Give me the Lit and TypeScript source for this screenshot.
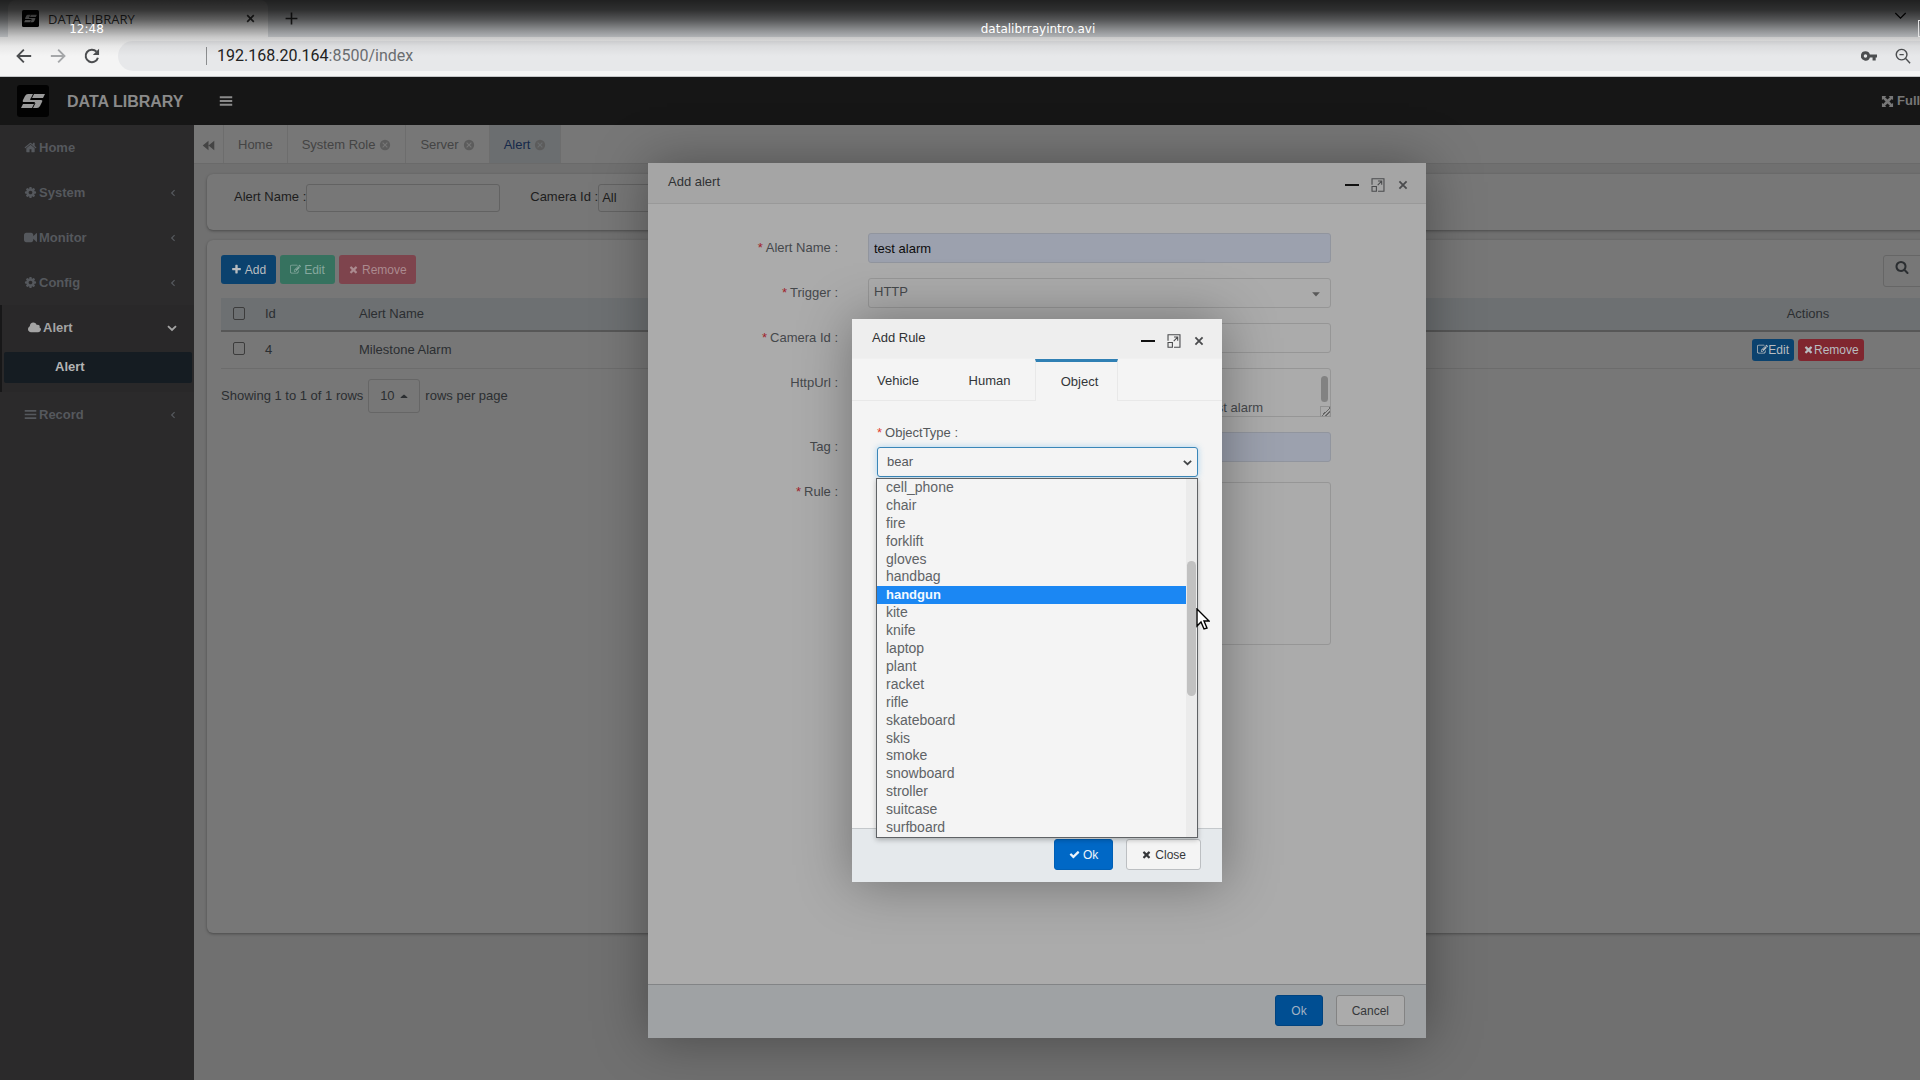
import { LitElement, html, css, svg } from "lit";
import { customElement, property } from "lit/decorators.js";
import { classMap } from "lit/directives/class-map.js";

const PATHS: Record<string, unknown> = {
  plus: svg`<path d="M1600 736v192q0 40-28 68t-68 28h-416v416q0 40-28 68t-68 28h-192q-40 0-68-28t-28-68v-416h-416q-40 0-68-28t-28-68v-192q0-40 28-68t68-28h416v-416q0-40 28-68t68-28h192q40 0 68 28t28 68v416h416q40 0 68 28t28 68z"/>`,
  times: svg`<path d="M1490 1322q0 40-28 68l-136 136q-28 28-68 28t-68-28l-294-294-294 294q-28 28-68 28t-68-28l-136-136q-28-28-28-68t28-68l294-294-294-294q-28-28-28-68t28-68l136-136q28-28 68-28t68 28l294 294 294-294q28-28 68-28t68 28l136 136q28 28 28 68t-28 68l-294 294 294 294q28 28 28 68z"/>`,
  check: svg`<path d="M1671 566q0 40-28 68l-724 724-136 136q-28 28-68 28t-68-28l-136-136-362-362q-28-28-28-68t28-68l136-136q28-28 68-28t68 28l294 295 656-657q28-28 68-28t68 28l136 136q28 28 28 68z"/>`,
  home: svg`<path d="M1472 992v480q0 26-19 45t-45 19h-384v-384h-256v384h-384q-26 0-45-19t-19-45v-480q0-1 .5-3t.5-3l575-474 575 474q1 2 1 6zm223-69l-62 74q-8 9-21 11h-3q-13 0-21-7l-692-577-692 577q-12 8-24 7-13-2-21-11l-62-74q-8-10-7-23.5t11-21.5l719-599q32-26 76-26t76 26l244 204v-195q0-14 9-23t23-9h192q14 0 23 9t9 23v408l219 182q10 8 11 21.5t-7 23.5z"/>`,
  cog: svg`<path d="M1152 896q0-106-75-181t-181-75-181 75-75 181 75 181 181 75 181-75 75-181zm512-109v222q0 12-8 23t-20 13l-185 28q-19 54-39 91 35 50 107 138 10 12 10 25t-9 23q-27 37-99 108t-94 71q-12 0-26-9l-138-108q-44 23-91 38-16 136-29 186-7 28-36 28h-222q-14 0-24.5-8.5t-11.5-21.5l-28-184q-49-16-90-37l-141 107q-10 9-25 9-14 0-25-11-126-114-165-168-7-10-7-23 0-12 8-23 15-21 51-66.5t54-70.5q-27-50-41-99l-183-27q-13-2-21-12.5t-8-23.5v-222q0-12 8-23t19-13l186-28q14-46 39-92-40-57-107-138-10-12-10-24 0-10 9-23 26-36 98.5-107.5t94.5-71.5q13 0 26 10l138 107q44-23 91-38 16-136 29-186 7-28 36-28h222q14 0 24.5 8.5t11.5 21.5l28 184q49 16 90 37l142-107q9-9 24-9 13 0 25 10 129 119 165 170 7 8 7 22 0 12-8 23-15 21-51 66.5t-54 70.5q26 50 41 98l183 28q13 2 21 12.5t8 23.5z"/>`,
  video: svg`<path d="M1792 352v1088q0 42-39 59-13 5-25 5-27 0-45-19l-403-403v166q0 119-84.5 203.5t-203.5 84.5h-704q-119 0-203.5-84.5t-84.5-203.5v-704q0-119 84.5-203.5t203.5-84.5h704q119 0 203.5 84.5t84.5 203.5v165l403-402q18-19 45-19 12 0 25 5 39 17 39 59z"/>`,
  cloud: svg`<path d="M1792 1090q0 180-118 306t-298 140H416q-170 0-293-121T0 1120q0-130 72-236t184-156q-10-220 130-370t340-150q180 0 310 100t170 250q60-50 146-50 110 0 186 78t76 186q0 60-34 116 92 30 152 100t60 102z"/>`,
  bars: svg`<path d="M100 290h1592v240H100zM100 776h1592v240H100zM100 1262h1592v240H100z"/>`,
  search: svg`<path d="M1216 832q0-185-131.5-316.5t-316.5-131.5-316.5 131.5-131.5 316.5 131.5 316.5 316.5 131.5 316.5-131.5 131.5-316.5zm512 832q0 52-38 90t-90 38q-54 0-90-38l-343-342q-179 124-399 124-143 0-273.5-55.5t-225-150-150-225-55.5-273.5 55.5-273.5 150-225 225-150 273.5-55.5 273.5 55.5 225 150 150 225 55.5 273.5q0 220-124 399l343 343q37 37 37 90z"/>`,
  edit: svg`<path d="M888 1184l116-116-152-152-116 116v56h96v96h56zm440-720q-16-16-33 1l-350 350q-17 17-1 33t33-1l350-350q17-17 1-33zm80 594v190q0 119-84.5 203.5t-203.5 84.5h-832q-119 0-203.5-84.5t-84.5-203.5v-832q0-119 84.5-203.5t203.5-84.5h832q63 0 117 25 15 7 18 23 3 17-9 29l-49 49q-14 14-32 8-23-6-45-6h-832q-66 0-113 47t-47 113v832q0 66 47 113t113 47h832q66 0 113-47t47-113v-126q0-13 9-22l64-64q15-15 35-7t20 29zm-96-738l288 288-672 672h-288v-288zm444 132l-92 92-288-288 92-92q28-28 68-28t68 28l152 152q28 28 28 68t-28 68z"/>`,
  backward: svg`<path d="M896 256v1280L100 896zM1692 256v1280L896 896z"/>`,
  circleX: svg`<path fill-rule="evenodd" d="M896 128a768 768 0 1 0 0 1536a768 768 0 0 0 0-1536zM600 480l296 296 296-296 120 120-296 296 296 296-120 120-296-296-296 296-120-120 296-296-296-296z"/>`,
  arrows: svg`<path d="M128 128h600L560 296l336 336 336-336-168-168h600v600l-168-168-336 336 336 336 168-168v600h-600l168-168-336-336-336 336 168 168H128v-600l168 168 336-336-336-336-168 168z"/>`,
  left: svg`<path d="M1180 380L660 896l520 516" fill="none" stroke="currentColor" stroke-width="220"/>`,
  down: svg`<path d="M300 620L896 1180l596-560" fill="none" stroke="currentColor" stroke-width="280"/>`,
  caretUp: svg`<path d="M256 1250q0-80 640-620 640 540 640 620z"/>`,
  caretDown: svg`<path d="M320 640h1152L896 1280z"/>`,
  close: svg`<path d="M360 360L1432 1432M1432 360L360 1432" fill="none" stroke="currentColor" stroke-width="270"/>`,
  max: svg`<path d="M130 860V100h1530v1590H900M130 1080h560v610H130zM860 900L1330 420M900 380h470v470" fill="none" stroke="currentColor" stroke-width="140"/>`,
  min: svg`<path d="M0 770h1792v256H0z"/>`,
  back: svg`<path d="M1700 896H200M880 180L170 896l710 716" fill="none" stroke="currentColor" stroke-width="210"/>`,
  forward: svg`<path d="M92 896h1500M912 180l710 716-710 716" fill="none" stroke="currentColor" stroke-width="210"/>`,
  reload: svg`<path d="M1560 1090A700 700 0 1 1 1400 410" fill="none" stroke="currentColor" stroke-width="230"/><path d="M1690 90v700H990z"/>`,
  tabPlus: svg`<path d="M896 80v1632M80 896h1632" fill="none" stroke="currentColor" stroke-width="220"/>`,
  thinDown: svg`<path d="M180 560L896 1270l716-710" fill="none" stroke="currentColor" stroke-width="170"/>`,
  key: svg`<path fill-rule="evenodd" d="M500 370a520 520 0 1 0 495 690h300v330h350v-330h147V740H995A520 520 0 0 0 500 370zM500 700a196 196 0 1 1 0 392a196 196 0 0 1 0-392z"/>`,
  zoomOut: svg`<path d="M740 150a590 590 0 1 0 .1 0zM1170 1160l520 540M500 740h480" fill="none" stroke="currentColor" stroke-width="160"/>`,
};

@customElement("ui-icon")
export class UiIcon extends LitElement {
  static styles = css`
    :host { display: inline-flex; flex: none; width: 13px; height: 13px; }
    svg { width: 100%; height: 100%; fill: currentColor; }
  `;
  @property() name = "";
  render() {
    return html`<svg viewBox="0 0 1792 1792" aria-hidden="true">${PATHS[this.name]}</svg>`;
  }
}

@customElement("brand-mark")
export class BrandMark extends LitElement {
  static styles = css`
    :host { display: inline-flex; flex: none; }
    svg { width: 100%; height: 100%; }
  `;
  render() {
    return html`<svg viewBox="0 0 32 32" aria-hidden="true">
      <rect width="32" height="32" rx="3" fill="#020202" />
      <path d="M11 9h17l-2 4H14l-1 2h11q2 0 1 2l-2 4q-1 2-3 2H4l2-4h11l1-2H7q-2 0-1-2l2-4q1-2 3-2z" fill="currentColor" />
      <path d="M17 8l-3 6M18 18l-3 6" stroke="#020202" stroke-width="1" />
    </svg>`;
  }
}

interface MenuItem { label: string; icon: string; open?: boolean; leaf?: boolean }

const MENU: MenuItem[] = [
  { label: "Home", icon: "home", leaf: true },
  { label: "System", icon: "cog" },
  { label: "Monitor", icon: "video" },
  { label: "Config", icon: "cog" },
  { label: "Alert", icon: "cloud", open: true },
  { label: "Record", icon: "bars" },
];
const TABS = ["Home", "System Role", "Server", "Alert"];
const OBJECTS = [
  "cell_phone", "chair", "fire", "forklift", "gloves", "handbag", "handgun", "kite", "knife", "laptop",
  "plant", "racket", "rifle", "skateboard", "skis", "smoke", "snowboard", "stroller", "suitcase", "surfboard",
];

@customElement("app-root")
export class AppRoot extends LitElement {
  static styles = css`
    :host {
      display: flex; flex-direction: column; position: relative; overflow: hidden;
      min-height: 100vh; background: #707070;
      font: 13px/18px "Liberation Sans", Arial, sans-serif; color: #303234;
    }
    * { box-sizing: border-box; }
    button, input, select, textarea { font: inherit; color: inherit; margin: 0; border-radius: 3px; }
    button { display: inline-flex; align-items: center; justify-content: center; padding: 0; border: 0; background: none; }
    select { appearance: none; }
    a { color: inherit; text-decoration: none; }

    .strip { display: flex; height: 37px; background: #d6d9dc; padding-left: 8px; }
    .tab {
      display: flex; align-items: center; gap: 9px; width: 260px; padding: 0 12px 0 14px;
      background: #f4f4f4; border-radius: 8px 8px 0 0; font: 13px/18px "Open Sans", sans-serif; color: #333;
    }
    .tab brand-mark { width: 17px; height: 17px; color: #b5b5b5; }
    .tab .name { flex: 1; }
    .tab ui-icon { width: 11px; height: 11px; }
    .newtab { width: 46px; color: #2b2b2b; }
    .strip .menu { margin-left: auto; margin-right: 13px; align-self: flex-start; padding-top: 9px; color: #000; }
    .toolbar {
      display: flex; align-items: center; height: 40px; padding: 0 0 1px 16px; gap: 18px;
      background: #f4f4f4; border-bottom: 1px solid #c4c6c8; color: #4c4e50;
    }
    .toolbar button ui-icon { width: 16px; height: 16px; }
    .toolbar .off { color: #a5a7a9; }
    .address {
      flex: 1; display: flex; align-items: center; height: 30px; padding: 0 9px 0 88px; gap: 18px;
      border-radius: 15px 0 0 15px; background: #e7e8ea;
    }
    .url { flex: 1; border-left: 1px solid #8b8d8f; padding-left: 10px; font: 16px/18px Roboto, sans-serif; color: #6b6e71; }
    .url b { font-weight: 400; color: #222; }

    .player {
      position: absolute; inset: 0 0 auto 0; height: 56px; pointer-events: none;
      display: grid; grid-template-columns: 173px 1fr 9px; padding-top: 20px;
      font: 12px/18px "DejaVu Sans", sans-serif; color: #fff; text-align: center;
      background: linear-gradient(rgba(0,0,0,.85) 0, rgba(0,0,0,.78) 10px, rgba(0,0,0,.6) 20px,
        rgba(0,0,0,.34) 30px, rgba(0,0,0,.18) 37px, rgba(0,0,0,.05) 46px, rgba(0,0,0,0) 56px);
    }
    .player .clip { padding-right: 8px; }
    .player .edge { margin-left: 7px; height: 17px; border: 1px solid #e4e4e4; border-right: 0; }

    /* The application is wider than the window, its right part is cut off. */
    .app { flex: 1; display: grid; grid-template: 48px 1fr / 194px 1fr; width: calc(100% + 154px); }
    .head { grid-column: 1 / 3; display: flex; align-items: center; background: #161616; color: #8a8a8a; font-weight: 700; }
    .head brand-mark { width: 32px; height: 32px; margin-left: 17px; color: #999; }
    .head .title { width: 152px; padding: 2px 0 0 18px; font-size: 16px; }
    .head .burger { width: 14px; height: 14px; margin-left: 18px; }
    .head .full { display: flex; align-items: center; gap: 3px; margin-left: auto; width: 193px; color: #777; }

    .side { background: #2b2a2b; color: #55585d; font-weight: 700; }
    .item { display: flex; align-items: center; width: 100%; height: 45px; padding: 0 16px 0 24px; gap: 2px; }
    .item .name { flex: 1; text-align: left; }
    .item ui-icon:last-child { width: 10px; height: 10px; }
    .group.open { border-left: 2px solid #171718; background: #292829; color: #a4a4a4; padding-bottom: 9px; }
    .group.open .item { padding-left: 26px; }
    .group.open .item ui-icon:last-child { width: 12px; height: 12px; }
    .sub { display: block; margin: 2px 2px 0; padding: 6px 0 7px 51px; background: #151c22; border-radius: 2px; color: #b4b4b4; }

    .main { display: flex; flex-direction: column; }
    .tabs { display: flex; height: 39px; background: #777; border-bottom: 1px solid #6a6a6a; color: #444; }
    .tabs button { display: flex; align-items: center; justify-content: center; gap: 4px; padding: 2px 14px 0; border-radius: 0; border-right: 1px solid #6d6d6d; }
    .tabs .first { width: 30px; padding: 2px 0 0; }
    .tabs button.on { background: #6b6e70; color: #15294a; }
    .tabs button ui-icon { width: 12px; height: 12px; color: #5c5c5c; }
    .tabs .first ui-icon { width: 13px; height: 13px; color: #444; }
    .card { background: #777; border-radius: 6px; box-shadow: 0 1px 3px rgba(0,0,0,.35); margin: 0 13px; padding: 0 14px; }
    .filter { display: flex; align-items: flex-start; height: 56px; margin-top: 10px; padding: 10px 27px; color: #1d1d1d; }
    .filter input { width: 194px; height: 28px; background: #777; border: 1px solid #626262; margin-right: 30px; }
    .filter select { width: 194px; height: 28px; background: #777; border: 1px solid #626262; padding: 0 3px; }
    .filter label { padding-top: 4px; }
    .list { height: 693px; margin-top: 10px; padding-top: 15px; color: #2b2e31; }
    .bar { display: flex; gap: 4px; height: 43px; align-items: flex-start; }
    .btn { height: 29px; padding: 0 9px; gap: 3px; font-size: 12px; color: #b9bdc0; }
    .btn ui-icon { width: 11px; height: 11px; }
    .bar .btn { min-width: 55px; }
    .blue { background: #0b426e; }
    .green { background: #36725f; color: #86a89e; }
    .pink { background: #7e444d; color: #ab8a8f; }
    .red { background: #80262f; }
    .tools { margin-left: auto; width: 164px; height: 32px; border: 1px solid #666; border-radius: 3px; padding: 4px 11px; }
    .tools ui-icon { width: 14px; height: 14px; }
    table { width: 100%; table-layout: fixed; border-collapse: collapse; }
    th, td { font-weight: 400; text-align: left; padding: 0 8px; }
    th { height: 33px; background: #6d7072; border-bottom: 2px solid #575757; }
    td { height: 37px; border-bottom: 1px solid #6c6c6c; }
    .c1 { width: 36px; } .c2 { width: 94px; } .c4 { width: 478px; }
    th:first-child, td:first-child { padding-left: 12px; padding-bottom: 2px; }
    th:last-child, td:last-child { text-align: center; }
    .tick { appearance: none; display: block; width: 12px; height: 13px; border: 1px solid #3c3c3c; border-radius: 2px; }
    .ops { display: flex; justify-content: center; gap: 4px; }
    .ops .btn { height: 22px; padding: 0 5px; gap: 0; }
    .pager { display: flex; align-items: center; padding-top: 10px; gap: 5px; }
    .pager .size { width: 52px; height: 34px; border: 1px solid #666; gap: 4px; }
    .pager ui-icon { width: 10px; height: 10px; }

    .layer { position: absolute; inset: 77px -154px -44px 0; display: grid; place-items: center; }
    .dialog { grid-area: 1 / 1; isolation: isolate; display: flex; flex-direction: column; box-shadow: 1px 1px 50px rgba(0,0,0,.35); }
    .outer { width: 778px; height: 875px; background: #ababab; color: #45484b; }
    .inner { width: 370px; height: 563px; background: #f4f4f4; color: #55585b; }
    .dtitle { display: flex; align-items: flex-start; height: 41px; padding: 10px 17px 0 20px; gap: 12px; color: #303234; border-bottom: 1px solid #999; background: #a5a5a5; }
    .inner .dtitle { background: #eee; border-bottom: 1px solid #f0f0f0; height: 40px; }
    .dtitle .name { flex: 1; }
    .dtitle button { margin-top: 5px; }
    .dtitle ui-icon { width: 14px; height: 14px; color: #4a4b4d; }
    .dtitle button:first-of-type ui-icon { color: #111; }
    .dtitle button:last-child ui-icon { width: 12px; height: 12px; margin-top: 1px; }
    .dfoot { display: flex; justify-content: flex-end; align-items: center; height: 54px; padding: 0 21px 2px; gap: 13px; background: #9fa2a4; border-top: 1px solid #828486; }
    .dfoot .btn { height: 31px; padding: 0 15px; gap: 4px; color: #35373a; border: 1px solid #838383; background: #ababab; }
    .dfoot .btn.ok { background: #004e92; border-color: #00437f; color: #a3b3c4; }
    .inner .dfoot { background: #e5e9ec; border-top-color: #c4c8cb; }
    .inner .dfoot .btn { background: #f4f4f4; border-color: #bcbfc2; padding: 0 14px; gap: 3px; }
    .inner .dfoot .btn.ok { background: #0068c6; border-color: #005fb5; color: #eef4fa; }

    .form { flex: 1; display: grid; grid-template-columns: 190px 1fr; column-gap: 30px; row-gap: 15px; align-content: start; padding: 29px 95px 0 0; }
    .form label { text-align: right; line-height: 30px; }
    i { font-style: normal; color: #a0222a; margin-right: 3px; }
    .form input, .form select, .field { width: 100%; height: 30px; border: 1px solid #969696; border-radius: 3px; background: #ababab; padding: 0 5px; display: block; }
    .form input.auto { background: #9ca1ae; border-color: #91959e; color: #0c0c0c; }
    .pick { position: relative; }
    .pick ui-icon { position: absolute; right: 9px; top: 10px; width: 12px; height: 12px; color: #5a5a5a; }
    .pick select { padding-bottom: 2px; }
    .area { position: relative; height: 49px; }
    .area textarea { display: block; width: 100%; height: 100%; resize: none; overflow: hidden; border: 1px solid #969696; background: #ababab; padding: 12px 5px 0 337px; line-height: 18px; white-space: pre; }
    .thumb { position: absolute; right: 3px; top: 8px; width: 7px; height: 26px; border-radius: 4px; background: #828282; }
    .grip { position: absolute; right: 0; bottom: 0; width: 11px; height: 11px; border: 1px solid #919191; background: linear-gradient(135deg, transparent 50%, #666 50%, #666 60%, transparent 60%, transparent 70%, #666 70%, #666 80%, transparent 80%); }
    .rule { height: 163px; margin-top: 5px; }

    .kinds { display: flex; height: 42px; border-bottom: 1px solid #e8e8e8; color: #333639; }
    .kinds button { width: 91px; border-radius: 0; padding-top: 2px; }
    .kinds button:first-child { width: 92px; }
    .kinds button.on { width: 83px; height: 42px; background: #f4f4f4; border: 1px solid #e8e8e8; border-top: 3px solid #3080b4; border-bottom: 0; padding: 0 0 0 6px; }
    .object { flex: 1; display: flex; flex-direction: column; padding: 23px 24px 0 25px; }
    .object label { margin-bottom: 5px; }
    .object i { color: #e2402f; }
    .combo { position: relative; }
    .combo > select { display: block; width: 100%; height: 30px; padding: 0 9px; background: #f4f4f4; border: 1px solid #3a86b8; box-shadow: 0 0 6px rgba(80,170,230,.45); }
    .combo > ui-icon { position: absolute; right: 5px; top: 10px; width: 11px; height: 11px; color: #414446; }
    .popup {
      position: absolute; left: -1px; right: 0; top: 31px; height: 360px; margin: 0; padding: 0 11px 0 0; list-style: none;
      display: grid; grid-template-rows: repeat(20, 1fr); font-size: 14px; line-height: 17px; color: #606366;
      border: 1px solid #5f6265; background: #f4f4f4; box-shadow: 0 2px 5px rgba(0,0,0,.25);
    }
    .popup li { padding-left: 9px; }
    .popup li.on { background: #1b87f3; color: #f4faff; font-size: 13px; font-weight: 700; }
    .track { position: absolute; right: 0; top: 0; bottom: 0; width: 11px; background: #ebebeb; }
    .track::after { content: ""; position: absolute; left: 1px; top: 82px; width: 9px; height: 135px; border-radius: 5px; background: #c1c1c1; }
    hr { width: 100%; height: 1px; border: 0; background: #dcdcdc; margin: 169px 0 0; }
    .pointer { position: absolute; left: 319px; top: 161px; width: 14px; height: 22px; }
  `;

  private controls() {
    return html`
      <button aria-label="Minimize"><ui-icon name="min"></ui-icon></button>
      <button aria-label="Maximize"><ui-icon name="max"></ui-icon></button>
      <button aria-label="Close"><ui-icon name="close"></ui-icon></button>`;
  }

  private browser() {
    return html`
      <div class="strip">
        <div class="tab"><brand-mark></brand-mark><span class="name">DATA LIBRARY</span>
          <button aria-label="Close tab"><ui-icon name="close"></ui-icon></button></div>
        <button class="newtab" aria-label="New tab"><ui-icon name="tabPlus"></ui-icon></button>
        <button class="menu" aria-label="Search tabs"><ui-icon name="thinDown"></ui-icon></button>
      </div>
      <div class="toolbar">
        <button aria-label="Back"><ui-icon name="back"></ui-icon></button>
        <button class="off" aria-label="Forward"><ui-icon name="forward"></ui-icon></button>
        <button aria-label="Reload"><ui-icon name="reload"></ui-icon></button>
        <div class="address">
          <span class="url"><b>192.168.20.164</b>:8500/index</span>
          <button aria-label="Passwords"><ui-icon name="key"></ui-icon></button>
          <button aria-label="Zoom"><ui-icon name="zoomOut"></ui-icon></button>
        </div>
      </div>`;
  }

  private sidebar() {
    return html`<nav class="side">${MENU.map((m) => html`
      <div class=${classMap({ group: true, open: !!m.open })}>
        <button class="item"><ui-icon name=${m.icon}></ui-icon><span class="name">${m.label}</span>
          ${m.leaf ? "" : html`<ui-icon name=${m.open ? "down" : "left"}></ui-icon>`}</button>
        ${m.open ? html`<a class="sub" href="#alert">Alert</a>` : ""}
      </div>`)}</nav>`;
  }

  private content() {
    return html`<main class="main">
      <div class="tabs">
        <button class="first" aria-label="Scroll tabs"><ui-icon name="backward"></ui-icon></button>
        ${TABS.map((t, n) => html`<button class=${classMap({ on: t === "Alert" })}>${t}${n ? html`<ui-icon name="circleX"></ui-icon>` : ""}</button>`)}
      </div>
      <form class="card filter">
        <label for="f-name">Alert Name :</label><input id="f-name" />
        <label for="f-cam">Camera Id :</label><select id="f-cam"><option>All</option></select>
      </form>
      <section class="card list">
        <div class="bar">
          <button class="btn blue"><ui-icon name="plus"></ui-icon>Add</button>
          <button class="btn green"><ui-icon name="edit"></ui-icon>Edit</button>
          <button class="btn pink"><ui-icon name="times"></ui-icon>Remove</button>
          <div class="tools"><button aria-label="Search"><ui-icon name="search"></ui-icon></button></div>
        </div>
        <table>
          <colgroup><col class="c1" /><col class="c2" /><col /><col class="c4" /></colgroup>
          <thead><tr><th><input class="tick" type="checkbox" aria-label="Select all" /></th><th>Id</th><th>Alert Name</th><th>Actions</th></tr></thead>
          <tbody><tr>
            <td><input class="tick" type="checkbox" aria-label="Select 4" /></td><td>4</td><td>Milestone Alarm</td>
            <td><div class="ops">
              <button class="btn blue"><ui-icon name="edit"></ui-icon>Edit</button>
              <button class="btn red"><ui-icon name="times"></ui-icon>Remove</button>
            </div></td>
          </tr></tbody>
        </table>
        <div class="pager">Showing 1 to 1 of 1 rows <button class="size">10<ui-icon name="caretUp"></ui-icon></button> rows per page</div>
      </section>
    </main>`;
  }

  private alertDialog() {
    return html`<section class="dialog outer" role="dialog" aria-label="Add alert">
      <div class="dtitle"><span class="name">Add alert</span>${this.controls()}</div>
      <form class="form">
        <label for="a-name"><i>*</i>Alert Name :</label><input id="a-name" class="auto" value="test alarm" />
        <label for="a-trig"><i>*</i>Trigger :</label>
        <div class="pick"><select id="a-trig"><option>HTTP</option></select><ui-icon name="caretDown"></ui-icon></div>
        <label for="a-cam"><i>*</i>Camera Id :</label><input id="a-cam" />
        <label for="a-url">HttpUrl :</label>
        <div class="area"><textarea id="a-url" .value=${"\ntest alarm"}></textarea><span class="thumb"></span><span class="grip"></span></div>
        <label for="a-tag">Tag :</label><input id="a-tag" class="auto" />
        <label id="a-rule"><i>*</i>Rule :</label><div class="field rule" role="group" aria-labelledby="a-rule"></div>
      </form>
      <div class="dfoot"><button class="btn ok">Ok</button><button class="btn">Cancel</button></div>
    </section>`;
  }

  private ruleDialog() {
    return html`<section class="dialog inner" role="dialog" aria-label="Add Rule">
      <div class="dtitle"><span class="name">Add Rule</span>${this.controls()}</div>
      <div class="kinds" role="tablist">
        <button role="tab">Vehicle</button><button role="tab">Human</button><button role="tab" class="on">Object</button>
      </div>
      <div class="object">
        <label for="r-type"><i>*</i>ObjectType :</label>
        <div class="combo">
          <select id="r-type"><option>bear</option></select><ui-icon name="down"></ui-icon>
          <ul class="popup" role="listbox" aria-label="ObjectType">
            ${OBJECTS.map((o) => html`<li role="option" class=${classMap({ on: o === "handgun" })}>${o}</li>`)}
            <span class="track"></span>
          </ul>
          <svg class="pointer" viewBox="0 0 14 22"><path d="M1 1v17l4-4 3 7 3-1-3-7h5z" fill="#fff" stroke="#000" stroke-width="1.4" /></svg>
        </div>
        <hr />
      </div>
      <div class="dfoot">
        <button class="btn ok"><ui-icon name="check"></ui-icon>Ok</button>
        <button class="btn"><ui-icon name="times"></ui-icon>Close</button>
      </div>
    </section>`;
  }

  render() {
    return html`
      ${this.browser()}
      <div class="app">
        <header class="head">
          <brand-mark></brand-mark><span class="title">DATA LIBRARY</span>
          <button aria-label="Toggle menu"><ui-icon class="burger" name="bars"></ui-icon></button>
          <a class="full" href="#full"><ui-icon name="arrows"></ui-icon>Full Screen</a>
        </header>
        ${this.sidebar()}${this.content()}
      </div>
      <div class="layer">${this.alertDialog()}${this.ruleDialog()}</div>
      <div class="player"><span>12:48</span><span class="clip">datalibrrayintro.avi</span><span class="edge"></span></div>`;
  }
}
